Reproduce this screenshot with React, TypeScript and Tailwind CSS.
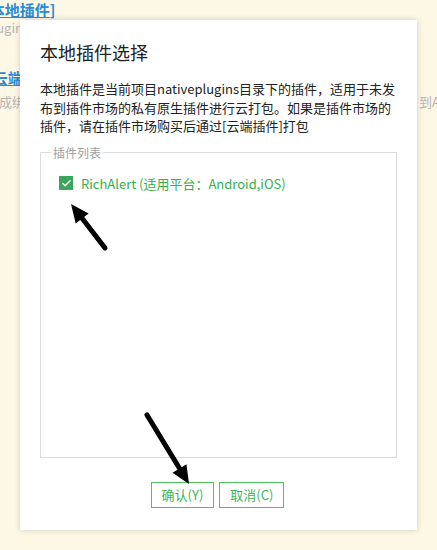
import { Check } from 'lucide-react'

const font = { fontFamily: '"Microsoft YaHei", "Noto Sans CJK SC", "Liberation Sans", sans-serif' }

function Arrow({ x1, y1, x2, y2 }: { x1: number; y1: number; x2: number; y2: number }) {
	const a = Math.atan2(y2 - y1, x2 - x1)
	const len = 20
	const w = 0.42
	const p1 = [x2 - len * Math.cos(a - w), y2 - len * Math.sin(a - w)]
	const p2 = [x2 - len * Math.cos(a + w), y2 - len * Math.sin(a + w)]
	const bx = x2 - 14 * Math.cos(a)
	const by = y2 - 14 * Math.sin(a)
	return (
		<g>
			<line x1={x1} y1={y1} x2={bx} y2={by} stroke="#000" strokeWidth={5} strokeLinecap="round" />
			<polygon points={`${x2},${y2} ${p1[0]},${p1[1]} ${p2[0]},${p2[1]}`} fill="#000" />
		</g>
	)
}

export default function App() {
	return (
		<div className="relative w-[437px] h-[550px] overflow-hidden bg-[#fdf7e6]" style={font}>
			{/* page behind the dialog */}
			<div className="whitespace-nowrap">
				<div className="ml-[-16px] text-[15px] font-bold text-[#2b8ad6] leading-[20px]">
					[<span className="underline">本地插件</span>]
				</div>
				<div className="ml-[-53px] text-[13px] text-[#b5b5b5] leading-[16px]">
					nativeplugins目录下的插件
				</div>
				<div className="mt-[32px] ml-[-13px] text-[15px] font-bold text-[#2b8ad6] leading-[20px]">
					[<span className="underline">云端插件</span>]
				</div>
				<div className="mt-[5px] ml-[-27px] flex text-[13px] text-[#b5b5b5] leading-[18px]">
					<span className="w-[446px] shrink-0">已完成绑定的插件</span>
					<span>到App</span>
				</div>
			</div>

			{/* dialog */}
			<div className="absolute left-[20px] top-[20px] w-[397px] h-[510px] bg-white shadow-[0_0_6px_rgba(0,0,0,0.18)] flex flex-col px-[20px]">
				<h2 className="mt-[19px] text-[18px] text-[#222] leading-[26px]">本地插件选择</h2>
				<p className="mt-[15px] text-[13px] text-[#222] leading-[18.5px]">
					本地插件是当前项目nativeplugins目录下的插件，适用于未发布到插件市场的私有原生插件进行云打包。如果是插件市场的插件，请在插件市场购买后通过[云端插件]打包
				</p>
				<fieldset className="mt-[9px] h-[313px] border border-[#dcdcdc] px-[18px]">
					<legend className="px-[2px] ml-[-8px] text-[12px] text-[#a0a0a0] leading-[16px]">插件列表</legend>
					<label className="mt-[13px] flex items-center gap-[8px] text-[13px] text-[#34b04c]">
						<span className="w-[14px] h-[14px] bg-[#3aa55c] flex items-center justify-center">
							<Check size={11} strokeWidth={3} className="text-white" />
						</span>
						RichAlert (适用平台：Android,iOS)
					</label>
				</fieldset>
				<div className="mt-[24px] flex justify-center gap-[5px] pr-[2px]">
					<button className="h-[26px] px-[10px] border border-[#4cc35c] text-[13px] text-[#3fb553] leading-none">确认(Y)</button>
					<button className="h-[26px] px-[10px] border border-[#4cc35c] text-[13px] text-[#3fb553] leading-none">取消(C)</button>
				</div>
			</div>

			<svg className="absolute left-0 top-0 pointer-events-none" width={437} height={550}>
				<Arrow x1={105} y1={248} x2={71} y2={204} />
				<Arrow x1={147} y1={415} x2={189} y2={484} />
			</svg>
		</div>
	)
}
